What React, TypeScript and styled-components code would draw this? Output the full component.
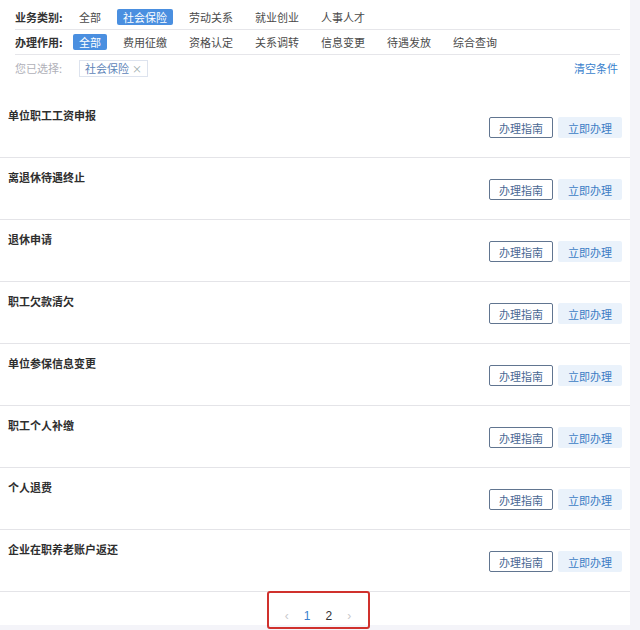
import React from "react";
import styled, { createGlobalStyle } from "styled-components";

const Global = createGlobalStyle`
  html, body { margin: 0; padding: 0; overflow: hidden; }
  body {
    background: #f4f4f9;
    font-family: "Noto Sans CJK SC", "Noto Sans", sans-serif;
    font-size: 11px;
    color: #333;
  }
`;

const Page = styled.div`
  width: 630px;
  height: 630px;
  display: flex;
  flex-direction: column;
`;

const Panel = styled.div`
  background: #fff;
  display: flex;
  flex-direction: column;
`;

const Filters = styled.div`
  padding: 4px 10px 0 15px;
  height: 96px;
  box-sizing: border-box;
`;

const FilterRow = styled.div<{ $h: number; $line?: boolean }>`
  height: ${(p) => p.$h}px;
  box-sizing: border-box;
  display: flex;
  align-items: center;
  border-bottom: ${(p) => (p.$line ? "1px solid #e6e6ea" : "none")};
`;

const Label = styled.div<{ $muted?: boolean }>`
  width: 58px;
  font-weight: ${(p) => (p.$muted ? 400 : 700)};
  color: ${(p) => (p.$muted ? "#b0b0b8" : "#333")};
  white-space: nowrap;
`;

const Options = styled.div`
  display: flex;
  gap: 10px;
`;

const Option = styled.span<{ $active?: boolean }>`
  padding: 0 6px;
  height: 16px;
  line-height: 16px;
  border-radius: 2px;
  background: ${(p) => (p.$active ? "#4a8fe0" : "transparent")};
  color: ${(p) => (p.$active ? "#fff" : "#4a4a4a")};
  white-space: nowrap;
`;

const Tag = styled.span`
  margin-left: 6px;
  padding: 0 5px;
  height: 15px;
  line-height: 15px;
  border: 1px solid #dde3ee;
  color: #5d84b8;
  font-size: 11px;
  display: inline-flex;
  gap: 3px;
  align-items: center;
`;

const TagX = styled.span`
  color: #9aa;
  font-size: 10px;
`;

const Clear = styled.span`
  margin-left: auto;
  color: #3a7fcd;
  padding-right: 2px;
`;

const List = styled.div`
  display: flex;
  flex-direction: column;
`;

const Item = styled.div`
  height: 62px;
  box-sizing: border-box;
  border-bottom: 1px solid #e4e4e8;
  padding: 11px 8px 0 8px;
  display: flex;
  flex-direction: column;
`;

const Title = styled.div`
  font-weight: 600;
  color: #2e2e2e;
  line-height: 16px;
`;

const Actions = styled.div`
  display: flex;
  justify-content: flex-end;
  gap: 5px;
  margin-top: -6px;
`;

const Btn = styled.span<{ $primary?: boolean }>`
  width: 64px;
  height: 21px;
  box-sizing: border-box;
  display: flex;
  align-items: center;
  justify-content: center;
  border-radius: 2px;
  border: 1px solid ${(p) => (p.$primary ? "transparent" : "#617590")};
  background: ${(p) => (p.$primary ? "#eaf2fb" : "#fff")};
  color: ${(p) => (p.$primary ? "#3c7cc4" : "#4a6894")};
`;

const Pager = styled.div`
  height: 33px;
  display: flex;
  align-items: flex-start;
  justify-content: center;
  margin-left: 6px;
`;

const PagerBox = styled.div`
  flex-shrink: 0;
  width: 103px;
  height: 38px;
  box-sizing: border-box;
  margin-top: -1px;
  border: 2px solid #d0312d;
  border-radius: 3px;
  display: flex;
  align-items: center;
  justify-content: center;
  gap: 15px;
  padding-top: 12px;
  position: relative;
  z-index: 1;
`;

const PageNum = styled.span<{ $current?: boolean; $arrow?: boolean }>`
  font-family: "Liberation Sans", Arial, sans-serif;
  font-size: 12px;
  color: ${(p) => (p.$arrow ? "#c8c8cc" : p.$current ? "#3a7fcd" : "#333")};
`;

const filters1 = ["全部", "社会保险", "劳动关系", "就业创业", "人事人才"];
const filters2 = ["全部", "费用征缴", "资格认定", "关系调转", "信息变更", "待遇发放", "综合查询"];
const items = [
  "单位职工工资申报",
  "离退休待遇终止",
  "退休申请",
  "职工欠款清欠",
  "单位参保信息变更",
  "职工个人补缴",
  "个人退费",
  "企业在职养老账户返还",
];

export default function App() {
  return (
    <>
      <Global />
      <Page>
        <Panel>
          <Filters>
            <FilterRow $h={26} $line>
              <Label>业务类别:</Label>
              <Options>
                {filters1.map((f) => (
                  <Option key={f} $active={f === "社会保险"}>{f}</Option>
                ))}
              </Options>
            </FilterRow>
            <FilterRow $h={25} $line>
              <Label>办理作用:</Label>
              <Options>
                {filters2.map((f, i) => (
                  <Option key={f} $active={i === 0}>{f}</Option>
                ))}
              </Options>
            </FilterRow>
            <FilterRow $h={26}>
              <Label $muted>您已选择:</Label>
              <Tag>
                社会保险<TagX>×</TagX>
              </Tag>
              <Clear>清空条件</Clear>
            </FilterRow>
          </Filters>
          <List>
            {items.map((t) => (
              <Item key={t}>
                <Title>{t}</Title>
                <Actions>
                  <Btn>办理指南</Btn>
                  <Btn $primary>立即办理</Btn>
                </Actions>
              </Item>
            ))}
          </List>
          <Pager>
            <PagerBox>
              <PageNum $arrow>‹</PageNum>
              <PageNum $current>1</PageNum>
              <PageNum>2</PageNum>
              <PageNum $arrow>›</PageNum>
            </PagerBox>
          </Pager>
        </Panel>
      </Page>
    </>
  );
}
